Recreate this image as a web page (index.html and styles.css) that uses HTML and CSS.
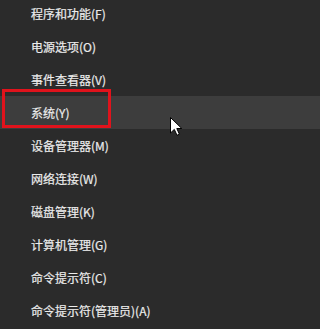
FILE: index.html
```html
<!DOCTYPE html>
<html lang="zh-CN">
<head>
<meta charset="utf-8">
<link rel="stylesheet" href="styles.css">
</head>
<body>
<div class="menu">
  <ul class="items">
    <li class="item">程序和功能(F)</li>
    <li class="item">电源选项(O)</li>
    <li class="item">事件查看器(V)</li>
    <li class="item active">系统(Y)</li>
    <li class="item">设备管理器(M)</li>
    <li class="item">网络连接(W)</li>
    <li class="item">磁盘管理(K)</li>
    <li class="item">计算机管理(G)</li>
    <li class="item">命令提示符(C)</li>
    <li class="item">命令提示符(管理员)(A)</li>
  </ul>
  <div class="mark"></div>
  <svg class="cursor" width="13" height="19" viewBox="0 0 13 19">
    <path d="M0.5 0.5 L0.5 16 L4.3 12.4 L7 18.3 L9.4 17.2 L6.8 11.5 L11.8 11.5 Z" fill="#fff" stroke="#000" stroke-width="1" stroke-linejoin="miter"/>
  </svg>
</div>
</body>
</html>
```
FILE: styles.css
```css
html, body {
  margin: 0;
  padding: 0;
  background: #2b2b2b;
}
body {
  height: 329px;
  overflow: hidden;
  font-family: "Noto Sans CJK SC", "Noto Sans", sans-serif;
}
.menu {
  position: relative;
  height: 329px;
}
.items {
  list-style: none;
  margin: -3px 0 0 0;
  padding: 0;
}
.item {
  height: 33px;
  display: flex;
  align-items: center;
  padding-left: 31px;
  font-size: 12px;
  color: #ececec;
  white-space: nowrap;
  -webkit-text-stroke: 0.2px #ececec;
}
.item.active {
  background: #3d3d3d;
}
.mark {
  position: absolute;
  left: 2px;
  top: 92px;
  width: 103px;
  height: 33px;
  border: 3px solid #e0131c;
}
.cursor {
  position: absolute;
  left: 170px;
  top: 120px;
}
```
